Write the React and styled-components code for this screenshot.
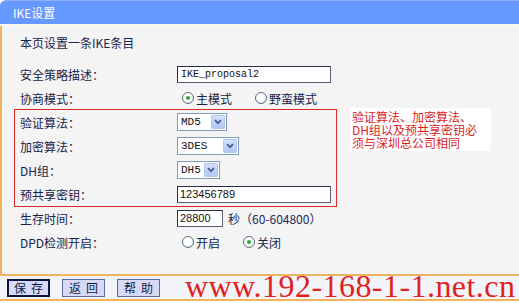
import React from 'react';
import styled, { createGlobalStyle } from 'styled-components';

const GlobalStyle = createGlobalStyle`
  html, body { margin: 0; padding: 0; background: #ffffff; }
  body {
    font-family: "Noto Sans CJK SC", "Liberation Sans", sans-serif;
    font-size: 12px;
    color: #18234a;
  }
`;

const Page = styled.div`
  width: 519px;
  height: 303px;
  display: flex;
  flex-direction: column;
  overflow: hidden;
  background: #ffffff;
`;

const TitleBar = styled.div`
  height: 23px;
  display: flex;
  align-items: center;
  padding-left: 13px;
  background: #6699ff;
  border-top: 1px solid #8db0f7;
  border-bottom: 2px solid #f9f9ee;
  border-top-left-radius: 6px;
  color: #ffffff;
  line-height: 12px;
`;

const Body = styled.div`
  flex: 0 0 248px;
  box-sizing: border-box;
  border-left: 2px solid #f2b35e;
  background: #f4f4f4;
  padding-top: 10px;
`;

const Intro = styled.div`
  line-height: 13px;
  padding-left: 18px;
  margin-bottom: 13px;
`;

const Row = styled.div`
  height: 24px;
  display: flex;
  align-items: center;
  padding-left: ${p => (p.$inBox ? '5px' : '18px')};
`;

const Label = styled.div`
  width: 157px;
  flex: none;
  white-space: nowrap;
`;

const RedGroup = styled.div`
  display: flex;
  align-items: flex-start;
  margin: -1px 0 -1px 12px;
`;

const RedBox = styled.div`
  width: 323px;
  box-sizing: border-box;
  border: 1px solid #d52b2b;
`;

const Note = styled.div`
  margin-left: 13px;
  margin-top: -1px;
  width: 141px;
  box-sizing: border-box;
  padding: 2px 0 2px 2px;
  background: #ffffff;
  color: #d81e1e;
  line-height: 13px;
  white-space: nowrap;
`;

const NoteLine = styled.div`
  height: 13px;
  line-height: 13px;
`;

const TextInput = styled.input`
  width: ${p => p.$w}px;
  height: 17px;
  box-sizing: border-box;
  margin: 0;
  border: 1px solid #262d45;
  border-right-color: #5a6078;
  border-bottom-color: #5a6078;
  background: #ffffff;
  padding: 0 0 0 ${p => (p.$mono ? 3 : 2)}px;
  font-family: ${p => (p.$mono ? '"Liberation Mono", monospace' : '"Liberation Sans", sans-serif')};
  font-size: ${p => (p.$mono ? 10 : 11)}px;
  color: #111111;
  outline: none;
`;

const SelectBox = styled.div`
  width: ${p => p.$w}px;
  height: 18px;
  box-sizing: border-box;
  border: 1px solid #7f9db9;
  background: #ffffff;
  display: flex;
  align-items: center;
  justify-content: space-between;
  padding: 0 1px 0 3px;
`;

const SelectValue = styled.span`
  font-family: "Liberation Mono", monospace;
  font-size: 11px;
  color: #111111;
`;

const ArrowBox = styled.span`
  width: 14px;
  height: 14px;
  box-sizing: border-box;
  border: 1px solid #b4c7ef;
  border-radius: 1px;
  background: linear-gradient(#d2defc, #b3c8f4);
  display: flex;
  align-items: center;
  justify-content: center;
`;

const RadioGroup = styled.div`
  display: flex;
  align-items: center;
  gap: 23px;
  padding-left: 5px;
`;

const RadioOption = styled.label`
  display: flex;
  align-items: center;
  gap: 2px;
`;

const RadioDot = styled.span`
  width: 12px;
  height: 12px;
  box-sizing: border-box;
  border-radius: 50%;
  border: 1px solid #5c6f8a;
  background: radial-gradient(circle at 40% 40%, #ffffff 40%, #dedfd9 100%);
  display: flex;
  align-items: center;
  justify-content: center;
  &::after {
    content: '';
    width: 4px;
    height: 4px;
    border-radius: 50%;
    background: ${p => (p.$checked ? '#2ea82e' : 'transparent')};
  }
`;

const Unit = styled.span`
  margin-left: 5px;
  color: #1b2a5a;
`;

const BottomBar = styled.div`
  height: 20px;
  border-top: 2px solid #f2b35e;
  border-bottom: 2px solid #f2b35e;
  background: #f2f4f9;
  display: flex;
  align-items: flex-start;
  padding: 3px 0 0 7px;
`;

const Button = styled.button`
  width: 43px;
  height: 18px;
  box-sizing: border-box;
  margin: 0 12px 0 0;
  padding: 0 0 0 5px;
  background: #d7daf6;
  border: ${p => (p.$primary ? '2px solid #0d1440' : '1px solid #5d6c9e')};
  font-family: "Noto Sans CJK SC", sans-serif;
  font-size: 12px;
  line-height: 12px;
  letter-spacing: 5px;
  color: #0e1a4a;
  white-space: nowrap;
`;

const Watermark = styled.div`
  margin-left: 13px;
  margin-top: -9px;
  font-family: "Liberation Serif", serif;
  font-size: 32px;
  line-height: 32px;
  letter-spacing: 0.45px;
  color: #e01f1f;
  white-space: nowrap;
`;

const Chevron = () => (
  <svg width="8" height="6" viewBox="0 0 8 6">
    <path d="M1 1.2 L4 4.2 L7 1.2" fill="none" stroke="#4a5f88" strokeWidth="1.8" />
  </svg>
);

const Select = ({ w, value }) => (
  <SelectBox $w={w}>
    <SelectValue>{value}</SelectValue>
    <ArrowBox>
      <Chevron />
    </ArrowBox>
  </SelectBox>
);

const Radio = ({ checked, children }) => (
  <RadioOption>
    <RadioDot $checked={checked} />
    <span>{children}</span>
  </RadioOption>
);

export default function App() {
  return (
    <Page>
      <GlobalStyle />
      <TitleBar>IKE设置</TitleBar>
      <Body>
        <Intro>本页设置一条IKE条目</Intro>
        <Row>
          <Label>安全策略描述：</Label>
          <TextInput $w={154} $mono readOnly value="IKE_proposal2" />
        </Row>
        <Row>
          <Label>协商模式：</Label>
          <RadioGroup>
            <Radio checked>主模式</Radio>
            <Radio>野蛮模式</Radio>
          </RadioGroup>
        </Row>
        <RedGroup>
          <RedBox>
            <Row $inBox>
              <Label>验证算法：</Label>
              <Select w={50} value="MD5" />
            </Row>
            <Row $inBox>
              <Label>加密算法：</Label>
              <Select w={62} value="3DES" />
            </Row>
            <Row $inBox>
              <Label>DH组：</Label>
              <Select w={43} value="DH5" />
            </Row>
            <Row $inBox>
              <Label>预共享密钥：</Label>
              <TextInput $w={154} readOnly value="123456789" />
            </Row>
          </RedBox>
          <Note>
            <NoteLine>验证算法、加密算法、</NoteLine>
            <NoteLine>DH组以及预共享密钥必</NoteLine>
            <NoteLine>须与深圳总公司相同</NoteLine>
          </Note>
        </RedGroup>
        <Row>
          <Label>生存时间：</Label>
          <TextInput $w={46} readOnly value="28800" />
          <Unit>秒（60-604800）</Unit>
        </Row>
        <Row>
          <Label>DPD检测开启：</Label>
          <RadioGroup>
            <Radio>开启</Radio>
            <Radio checked>关闭</Radio>
          </RadioGroup>
        </Row>
      </Body>
      <BottomBar>
        <Button $primary>保存</Button>
        <Button>返回</Button>
        <Button>帮助</Button>
        <Watermark>www.192-168-1-1.net.cn</Watermark>
      </BottomBar>
    </Page>
  );
}
